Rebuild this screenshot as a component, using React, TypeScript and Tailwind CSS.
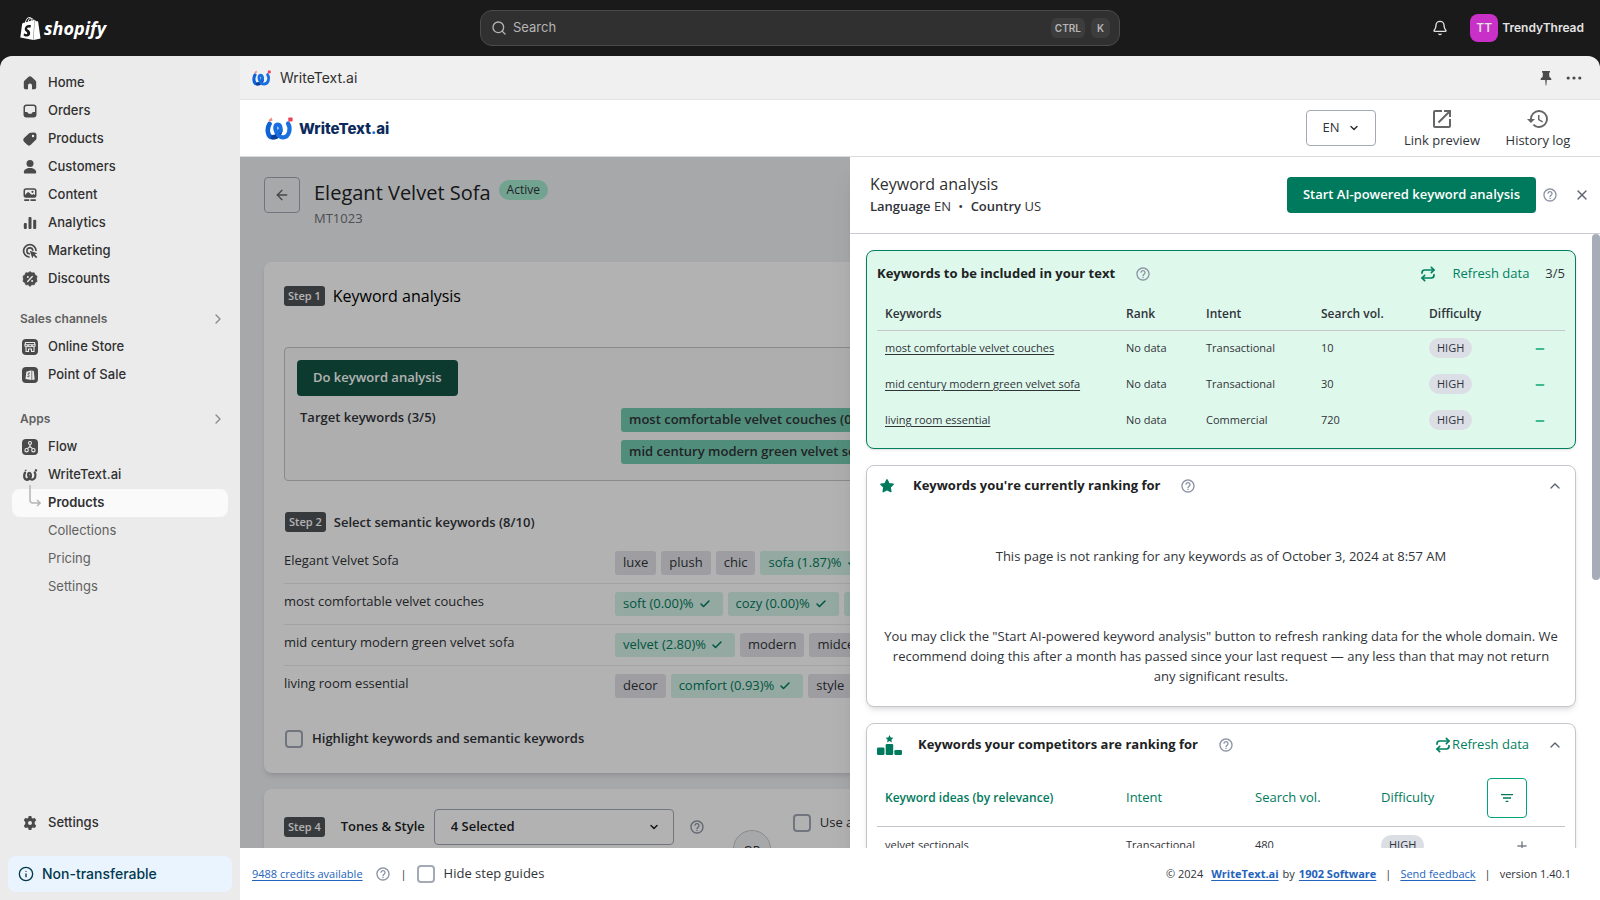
import React, { useState } from "react";
import { ArrowLeft, Bell, Check, ChevronDown, ChevronRight, ChevronUp, Info, Minus, Plus, Repeat, Search, X } from "lucide-react";
import { MdFilterList, MdHelpOutline, MdHistory, MdOpenInNew } from "react-icons/md";
import { SiShopify } from "react-icons/si";

const icons: { [key: string]: React.ReactNode } = {
  home: <path d="M8 1.2c.5 0 1 .2 1.4.6l4 3.8c.5.5.8 1.1.8 1.8v5c0 1-.8 1.8-1.800 1.800H10V10.500a2 2 0 0 0-4 0v3.700H3.600c-1 0-1.800-.8-1.800-1.800v-5c0-.7.3-1.300.8-1.800l4-3.800c.4-.4.9-.6 1.400-.6z" />,
  orders: (
    <path
      fillRule="evenodd"
      d="M4.500 1.500h7A3 3 0 0 1 14.500 4.500v7a3 3 0 0 1-3 3h-7a3 3 0 0 1-3-3v-7a3 3 0 0 1 3-3zm0 1.500A1.500 1.500 0 0 0 3 4.500V9h1.800c.4 0 .7.200.9.500l.5.8c.2.400.5.500.9.500h1.800c.4 0 .7-.1.900-.5l.5-.8c.2-.3.500-.5.900-.5H13V4.500A1.500 1.500 0 0 0 11.500 3z"
    />
  ),
  products: (
    <path
      fillRule="evenodd"
      d="M8.600 1.700 12 1.500A2.500 2.500 0 0 1 14.500 4v3.300c0 .5-.2 1-.6 1.400l-4.800 4.900a3 3 0 0 1-4.200 0L2.300 11a3 3 0 0 1 0-4.200l4.900-4.500c.4-.4.9-.6 1.400-.6zM11 6.200a1.200 1.200 0 1 0 0-2.400 1.200 1.200 0 0 0 0 2.400z"
    />
  ),
  customers: (
    <>
      <circle cx="8" cy="4.500" r="3.500" />
      <path d="M1.800 13.500c0-3 2.700-4.500 6.200-4.500s6.200 1.500 6.200 4.500c0 .6-.4 1-1 1H2.800c-.6 0-1-.4-1-1z" />
    </>
  ),
  content: (
    <>
      <path
        fillRule="evenodd"
        d="M4 1.200h8A2.500 2.500 0 0 1 14.500 3.700v4.600A2.500 2.500 0 0 1 12 10.800H4A2.500 2.500 0 0 1 1.500 8.300V3.700A2.500 2.500 0 0 1 4 1.200zM3 8l2.400-2.400c.5-.5 1.200-.5 1.700 0l1.700 1.700c.6.500 1.300.5 1.900.1l.7-.4L13 8V3.700a1 1 0 0 0-1-1H4a1 1 0 0 0-1 1z"
      />
      <circle cx="10.500" cy="4.800" r="1.100" />
      <path d="M2.200 12.300h5v1.600h-5zM8.500 12.300h5.300v1.600H8.500z" />
    </>
  ),
  analytics: (
    <>
      <rect x="1.800" y="8" width="3" height="6" rx="1" />
      <rect x="6.500" y="2" width="3" height="12" rx="1" />
      <rect x="11.200" y="4.800" width="3" height="9.200" rx="1" />
    </>
  ),
  marketing: (
    <>
      <path d="M14 7.500A6.200 6.200 0 1 0 7 14" fill="none" stroke="currentColor" strokeWidth="1.700" strokeLinecap="round" />
      <path d="M10.800 7.200A3 3 0 1 0 7.300 10.800" fill="none" stroke="currentColor" strokeWidth="1.600" strokeLinecap="round" />
      <path d="M7.800 7.800l7.500 2.500-2.500 1.300 2.500 2.500-1.200 1.200-2.500-2.500-1.300 2.500z" />
    </>
  ),
  discounts: (
    <>
      <path d="M8 .6l1.900 1.400 2.300-.2.800 2.200 2 1.200L14.500 8l.5 2.400-2 1.200-.8 2.200-2.300-.2L8 15.400l-1.900-1.800-2.300.2L3 11.600l-2-1.200L1.500 8 1 5.200 3 4l.8-2.200 2.300.2z" strokeLinejoin="round" stroke="currentColor" strokeWidth=".8" />
      <path d="M10.300 5.600 5.700 10.400" stroke="#ebebeb" strokeWidth="1.400" strokeLinecap="round" />
      <circle cx="5.900" cy="6" r="1" fill="#ebebeb" />
      <circle cx="10.100" cy="10" r="1" fill="#ebebeb" />
    </>
  ),
  store: (
    <>
      <rect width="16" height="16" rx="4" />
      <path d="M3.500 3.500h9l.7 2.800c0 1-.7 1.500-1.500 1.500S10.300 7.200 10 6.500C9.700 7.300 9 7.800 8 7.800S6.300 7.300 6 6.500c-.3.700-1 1.300-1.800 1.300S2.800 7.200 2.800 6.300zM4 8v4.500h2.500V10h3v2.500H12V8M3 5.800h10" fill="none" stroke="#ebebeb" strokeWidth="1.100" />
    </>
  ),
  pos: (
    <>
      <rect width="16" height="16" rx="4" />
      <path d="M4.300 4.800 9.500 3.300v9.700l-6-1zM10.200 3.500l1.600.8.900 8.100-2.500.6z" fill="#ebebeb" />
      <path d="M8 6.300c-1.200-.6-2.200 0-2.100.8.100.9 1.500.9 1.400 1.900-.1.900-1.200 1-1.900.4" fill="none" stroke="#4a4a4a" strokeWidth="1" />
    </>
  ),
  flow: (
    <>
      <rect width="16" height="16" rx="4" />
      <g fill="none" stroke="#ebebeb" strokeWidth="1.100">
        <circle cx="8" cy="4" r="1.500" />
        <circle cx="4.600" cy="11.200" r="1.700" />
        <circle cx="11.400" cy="11.200" r="1.700" />
        <path d="M8 5.500v2L5.500 9.700M8 7.500l2.500 2.200" />
      </g>
    </>
  ),
  settings: (
    <path
      fillRule="evenodd"
      d="M6.700 1h2.600l.5 2 1 .6 2-.6 1.400 2.300L12.700 7v2l1.500 1.700-1.400 2.300-2-.6-1 .6-.5 2H6.700l-.5-2-1-.6-2 .6-1.400-2.300L3.300 9V7L1.800 5.300 3.200 3l2 .6 1-.6zM8 10a2 2 0 1 0 0-4 2 2 0 0 0 0 4z"
    />
  ),
};

const Icon = ({ name }: { name: string }) => (
  <svg viewBox="0 0 16 16" fill="currentColor" className="size-4 shrink-0" aria-hidden="true">
    {icons[name]}
  </svg>
);

const WriteTextMark = ({ className, mono = false }: { className: string; mono?: boolean }) => (
  <svg viewBox="0 0 28 23" className={className} fill="none" strokeLinecap="round" aria-hidden="true">
    <path d="M4.500 7C1.800 11 2 20.300 7.800 20.300c3.500 0 6.200-2.800 7.300-6.300" stroke={mono ? "#4a4a4a" : "#0f62d6"} strokeWidth="4.600" />
    <path d="M8 20.300c3.500 0 6-2.500 7.200-6" stroke={mono ? "#4a4a4a" : "#0a3f94"} strokeWidth="4.600" />
    <path d="M15.300 14c1-3.500-.3-6.500-2.600-6.500-2.200 0-2.900 2.500-2.100 5.500 1 4 4 7.600 7.800 7.300C24.500 20 26 11 23 6.500" stroke={mono ? "#4a4a4a" : "#1a6fe0"} strokeWidth="4.200" />
    <path d="M3.500 3.200 6.500.6l1.200 2.800-3.200 1z" fill={mono ? "#4a4a4a" : "#f58a7a"} />
    <rect x="23.300" y=".4" width="4.300" height="4.200" rx=".8" fill={mono ? "#4a4a4a" : "#ee4056"} />
  </svg>
);

const mainLinks = [
  { icon: "home", label: "Home" },
  { icon: "orders", label: "Orders" },
  { icon: "products", label: "Products" },
  { icon: "customers", label: "Customers" },
  { icon: "content", label: "Content" },
  { icon: "analytics", label: "Analytics" },
  { icon: "marketing", label: "Marketing" },
  { icon: "discounts", label: "Discounts" },
];

const NavLink = ({ icon, label }: { icon: string; label: string }) => (
  <a href="#" className="flex h-7 items-center pl-[22px]">
    <span className="flex w-[26px]">
      <Icon name={icon} />
    </span>
    <span className="font-medium text-[#303030]">{label}</span>
  </a>
);

const NavHeading = ({ label }: { label: string }) => (
  <button className="mt-3 flex h-7 w-full items-center justify-between pr-[14px] pl-5 text-xs font-semibold text-[#616161]">
    {label}
    <ChevronRight className="size-4 text-[#8a8a8a]" />
  </button>
);

const Sidebar = () => (
  <nav className="flex w-60 shrink-0 flex-col bg-[#ebebeb] pt-[13px] pb-2 font-['Inter',sans-serif] text-[13px] text-[#4a4a4a]">
    {mainLinks.map((link) => (
      <NavLink key={link.label} {...link} />
    ))}
    <NavHeading label="Sales channels" />
    <NavLink icon="store" label="Online Store" />
    <NavLink icon="pos" label="Point of Sale" />
    <div className="h-1" />
    <NavHeading label="Apps" />
    <NavLink icon="flow" label="Flow" />
    <a href="#" className="flex h-7 items-center pl-[22px]">
      <span className="w-[26px]">
        <WriteTextMark className="h-3 w-4" mono />
      </span>
      <span className="font-medium text-[#303030]">WriteText.ai</span>
    </a>
    <a href="#" className="relative mx-3 flex h-7 items-center rounded-lg bg-[#fafafa] pl-9 font-semibold text-[#303030]">
      <svg viewBox="0 0 14 22" fill="none" stroke="#b5b5b5" strokeWidth="1.500" className="absolute -top-1 left-4 h-[22px] w-[14px]">
        <path d="M2 0v15a3 3 0 0 0 3 3h7M9 15l3.200 3L9 21" />
      </svg>
      Products
    </a>
    {["Collections", "Pricing", "Settings"].map((label) => (
      <a key={label} href="#" className="flex h-7 items-center pl-12 text-[#616161]">
        {label}
      </a>
    ))}
    <div className="mt-auto mb-[19px]">
      <NavLink icon="settings" label="Settings" />
    </div>
    <button className="mx-2 flex h-9 items-center gap-2 rounded-lg bg-[#eaf4ff] pl-[10px] text-sm font-medium text-[#00394d]">
      <Info className="size-4" />
      Non-transferable
    </button>
  </nav>
);

const TopBar = () => (
  <header className="grid h-14 shrink-0 grid-cols-[1fr_640px_1fr] items-center bg-[#1a1a1a] font-['Inter',sans-serif]">
    <a href="#" className="flex items-center gap-[2px] pl-[19px] text-white">
      <SiShopify className="size-[23px]" />
      <span className="font-['Open_Sans',sans-serif] text-lg leading-6 font-bold italic">shopify</span>
    </a>
    <label className="flex h-9 items-center gap-[6px] rounded-xl border border-[#4a4a4a] bg-[#303030] pr-[9px] pl-[10px] text-[#b5b5b5]">
      <Search className="size-4" />
      <input type="text" placeholder="Search" aria-label="Search" className="min-w-0 flex-1 bg-transparent text-[13px] outline-none placeholder:text-[#b5b5b5]" />
      <kbd className="rounded-md bg-[#3d3d3d] px-1 font-['Inter',sans-serif] text-[10px] leading-5 font-semibold">CTRL</kbd>
      <kbd className="rounded-md bg-[#3d3d3d] px-[6px] font-['Inter',sans-serif] text-[10px] leading-5 font-semibold">K</kbd>
    </label>
    <div className="flex items-center justify-end pr-4 text-[#e3e3e3]">
      <button aria-label="Notifications" className="mr-[22px]">
        <Bell className="size-4" />
      </button>
      <button className="flex items-center gap-1 text-xs font-semibold">
        <span className="flex size-7 items-center justify-center rounded-lg bg-[#c830c8]">TT</span>
        TrendyThread
      </button>
    </div>
  </header>
);

const AppHeader = () => (
  <>
    <div className="flex h-11 shrink-0 items-center border-b border-[#e3e3e3] bg-[#f0f0f0] pr-[18px] pl-3 font-['Inter',sans-serif] text-sm text-[#303030]">
      <WriteTextMark className="mr-[9px] h-4 w-[19px]" />
      WriteText.ai
      <button aria-label="Pin app" className="mr-[14px] ml-auto">
        <svg viewBox="0 0 12 16" fill="#4a4a4a" className="h-4 w-3">
          <path d="M2.500 1h7c.4 0 .6.300.6.600 0 .9-.8 1.200-1 2l.3 3.400c1.300.7 2 1.700 2 3.100H6.800L6.300 15.500h-.6L5.200 10.100H.6C.6 8.700 1.300 7.700 2.600 7l.3-3.400c-.2-.8-1-1.100-1-2 0-.3.2-.6.600-.6z" />
        </svg>
      </button>
      <button aria-label="More actions">
        <svg viewBox="0 0 16 16" fill="#4a4a4a" className="size-4">
          <circle cx="2.200" cy="8" r="1.600" />
          <circle cx="8" cy="8" r="1.600" />
          <circle cx="13.800" cy="8" r="1.600" />
        </svg>
      </button>
    </div>
    <div className="flex h-[57px] shrink-0 items-center border-b border-[#d9dbde] bg-white pr-[28px] pl-[25px]">
      <a href="#" className="flex items-center gap-[6px] font-['Inter',sans-serif] text-[15px] font-extrabold text-[#0b2a5b]">
        <WriteTextMark className="h-[23px] w-7" />
        <span className="pt-[3px]">
          WriteText<span className="text-[#1a6fe0]">.</span>ai
        </span>
      </a>
      <button className="mr-7 ml-auto flex h-9 w-[70px] items-center justify-center gap-2 rounded border border-[#a3a9b5]">
        EN
        <ChevronDown className="size-3 stroke-[3]" />
      </button>
      <button className="mr-6 flex w-[76px] flex-col items-center leading-[18px] whitespace-nowrap">
        <MdOpenInNew className="size-6 text-[#666]" />
        Link preview
      </button>
      <button className="flex w-[68px] flex-col items-center leading-[18px] whitespace-nowrap">
        <MdHistory className="size-6 text-[#666]" />
        History log
      </button>
    </div>
  </>
);

const Step = ({ n }: { n: number }) => (
  <span className="rounded-[3px] bg-[#505357] px-1 text-[11px] leading-5 font-semibold text-white">Step {n}</span>
);

const CheckField = ({ label, className = "" }: { label: string; className?: string }) => {
  const [checked, setChecked] = useState(false);
  return (
    <label className={`flex items-center gap-[9px] whitespace-nowrap ${className}`}>
      <input
        type="checkbox"
        checked={checked}
        onChange={() => setChecked(!checked)}
        className="size-[18px] appearance-none rounded border-2 border-[#a3a9b5] checked:bg-[#008060]"
      />
      {label}
    </label>
  );
};

const Help = ({ className = "" }: { className?: string }) => (
  <button aria-label="Help" className={`text-[#8c93a3] ${className}`}>
    <MdHelpOutline className="size-4" />
  </button>
);

const semanticRows = [
  { label: "Elegant Velvet Sofa", chips: ["luxe", "plush", "chic", "sofa (1.87)%"] },
  { label: "most comfortable velvet couches", chips: ["soft (0.00)%", "cozy (0.00)%", "lounge (0.00)%"] },
  { label: "mid century modern green velvet sofa", chips: ["velvet (2.80)%", "modern", "midcentury"] },
  { label: "living room essential", chips: ["decor", "comfort (0.93)%", "style"] },
];

const Chip = ({ text }: { text: string }) => {
  const selected = text.includes("%");
  return (
    <button className={`flex h-6 items-center gap-[5px] rounded-[3px] px-2 whitespace-nowrap ${selected ? "bg-[#d5f2e8] pr-3 text-[#007a5c]" : "bg-[#e2e3e8]"}`}>
      {text}
      {selected && <Check className="size-3 stroke-[3]" />}
    </button>
  );
};

const ProductEditor = () => (
  <main className="h-full overflow-hidden bg-[#f0f1f4] px-6 pt-5">
    <div className="flex items-start">
      <button aria-label="Back" className="flex size-9 items-center justify-center rounded border border-[#a3a9b5] text-[#666]">
        <ArrowLeft className="size-4" />
      </button>
      <div className="ml-[14px]">
        <div className="flex items-start gap-2">
          <h1 className="pt-1 text-xl leading-6 font-medium text-[#202223]">Elegant Velvet Sofa</h1>
          <span className="mt-[3px] rounded-full bg-[#a4e8ce] px-2 text-xs leading-5">Active</span>
        </div>
        <p className="leading-[26px] text-[#6d7175]">MT1023</p>
      </div>
    </div>

    <section className="mt-[31px] h-[511px] rounded-lg bg-white px-5 pt-6 shadow-md">
      <div className="flex items-center gap-2">
        <Step n={1} />
        <h2 className="text-base leading-5 text-black">Keyword analysis</h2>
      </div>
      <div className="mt-[41px] h-[134px] rounded border border-[#c3c7cc] bg-[#f9f9f9] px-3 pt-3">
        <button className="h-9 rounded bg-[#145443] px-4 font-semibold text-white">Do keyword analysis</button>
        <div className="mt-3 flex font-semibold">
          <p className="w-[324px] shrink-0 pl-[3px] leading-[18px]">Target keywords (3/5)</p>
          <div className="flex flex-col items-start gap-2">
            <button className="h-6 rounded-[3px] bg-[#74cbb0] px-2 whitespace-nowrap">most comfortable velvet couches (0.00)%</button>
            <button className="h-6 rounded-[3px] bg-[#74cbb0] px-2 whitespace-nowrap">mid century modern green velvet sofa (0.00)%</button>
          </div>
        </div>
      </div>
      <div className="mt-[31px] flex items-center gap-2 pl-px">
        <Step n={2} />
        <h3 className="leading-5 font-semibold">Select semantic keywords (8/10)</h3>
      </div>
      <div className="mt-[11px] divide-y divide-[#e8eaed]">
        {semanticRows.map(({ label, chips }) => (
          <div key={label} className="flex h-[41px] pt-2">
            <p className="w-[331px] shrink-0">{label}</p>
            <div className="flex gap-[5px]">
              {chips.map((chip) => (
                <Chip key={chip} text={chip} />
              ))}
            </div>
          </div>
        ))}
      </div>
      <CheckField label="Highlight keywords and semantic keywords" className="mt-[22px] pl-px font-semibold" />
    </section>

    <section className="mt-4 flex h-60 items-start rounded-lg bg-white px-5 pt-5 shadow-md">
      <div className="flex h-9 items-center text-[#202223]">
        <Step n={4} />
        <label htmlFor="tones" className="ml-4 w-[93px] shrink-0 font-semibold whitespace-nowrap">
          Tones &amp; Style
        </label>
        <div className="grid w-60 items-center">
          <select id="tones" className="col-start-1 row-start-1 h-9 w-full appearance-none rounded border border-[#a3a9b5] px-4 font-semibold">
            <option>4 Selected</option>
          </select>
          <ChevronDown className="pointer-events-none col-start-1 row-start-1 mr-[14px] size-3 justify-self-end stroke-[3]" />
        </div>
        <Help className="ml-[15px]" />
      </div>
      <div className="mt-[21px] ml-7 flex size-[38px] shrink-0 items-center justify-center rounded-full border border-[#c3c7cc] bg-[#f0f1f4] pt-1 text-xs">OR</div>
      <CheckField label="Use a style reference" className="mt-1 ml-[22px]" />
    </section>
  </main>
);

const Difficulty = ({ level }: { level: string }) => (
  <span className="inline-block rounded-full bg-[#dcdee6] px-2 leading-5">{level}</span>
);

const keywords = [
  { keyword: "most comfortable velvet couches", intent: "Transactional", volume: 10 },
  { keyword: "mid century modern green velvet sofa", intent: "Transactional", volume: 30 },
  { keyword: "living room essential", intent: "Commercial", volume: 720 },
];

const IncludedKeywords = () => (
  <section className="h-[199px] rounded-lg border border-[#008060] bg-[#dff8ec] px-[10px] pt-[13px] shadow">
    <div className="flex h-5 items-center">
      <h3 className="font-bold text-[#202223]">Keywords to be included in your text</h3>
      <Help className="ml-5 flex" />
      <button className="ml-auto flex items-center gap-4 text-[#008060]">
        <Repeat className="size-4 stroke-[2.5]" />
        Refresh data
      </button>
      <span className="ml-4">3/5</span>
    </div>
    <table className="mt-[14px] w-full table-fixed text-left text-[11px]">
      <colgroup>
        <col className="w-[241px]" />
        <col className="w-20" />
        <col className="w-[115px]" />
        <col className="w-[108px]" />
        <col />
        <col className="w-[74px]" />
      </colgroup>
      <thead>
        <tr className="h-8 border-b border-[#c3c7cc] text-xs">
          {["Keywords", "Rank", "Intent", "Search vol.", "Difficulty", ""].map((head) => (
            <th key={head} className="px-2 font-semibold">
              {head}
            </th>
          ))}
        </tr>
      </thead>
      <tbody>
        {keywords.map(({ keyword, intent, volume }) => (
          <tr key={keyword} className="h-9">
            <td className="px-2 whitespace-nowrap">
              <a href="#" className="underline underline-offset-2">
                {keyword}
              </a>
            </td>
            <td className="px-2">No data</td>
            <td className="px-2">{intent}</td>
            <td className="px-2">{volume}</td>
            <td className="px-2">
              <Difficulty level="HIGH" />
            </td>
            <td className="pr-[19px] text-right">
              <button aria-label={`Remove ${keyword}`} className="align-middle text-[#40b890]">
                <Minus className="size-3 stroke-[4]" />
              </button>
            </td>
          </tr>
        ))}
      </tbody>
    </table>
  </section>
);

const RankingKeywords = () => (
  <section className="mt-4 h-[242px] rounded-lg border border-[#c3c7cc] bg-white px-[10px] pt-[10px] shadow-md">
    <div className="flex h-5 items-center">
      <svg viewBox="0 0 16 16" fill="#007a5c" stroke="#007a5c" strokeWidth="1.500" strokeLinejoin="round" className="mx-[2px] size-4">
        <path d="M8 1.800 9.900 5.700l4.200.6-3 3 .7 4.300L8 11.600l-3.800 2 .7-4.300-3-3 4.200-.6z" />
      </svg>
      <h3 className="ml-4 font-bold text-[#202223]">Keywords you're currently ranking for</h3>
      <Help className="ml-5 flex" />
      <button aria-label="Collapse" className="mr-[2px] ml-auto">
        <ChevronUp className="size-4 text-[#5c6370]" />
      </button>
    </div>
    <p className="mt-[50px] text-center leading-5">This page is not ranking for any keywords as of October 3, 2024 at 8:57 AM</p>
    <p className="mt-[60px] text-center leading-5 whitespace-nowrap">
      You may click the "Start AI-powered keyword analysis" button to refresh ranking data for the whole domain. We
      <br />
      recommend doing this after a month has passed since your last request — any less than that may not return
      <br />
      any significant results.
    </p>
  </section>
);

const CompetitorKeywords = () => (
  <section className="mt-4 rounded-lg border border-[#c3c7cc] bg-white px-[10px] pt-[9px] shadow-md">
    <div className="flex h-6 items-center">
      <svg viewBox="0 0 25 20" fill="#007a5c" className="h-5 w-[25px]">
        <path d="M12.500 0l1.200 2.400 2.700.4-2 1.900.5 2.700-2.400-1.300-2.400 1.300.5-2.700-2-1.900 2.700-.4z" />
        <rect x="0" y="12.500" width="7.500" height="7.500" rx="1.200" />
        <rect x="8.700" y="9" width="7.500" height="11" rx="1.200" />
        <rect x="17.400" y="15" width="7.600" height="5" rx="1.200" />
      </svg>
      <h3 className="ml-4 font-bold text-[#202223]">Keywords your competitors are ranking for</h3>
      <Help className="ml-5 flex" />
      <button className="ml-auto flex items-center gap-px text-[#008060]">
        <Repeat className="size-4 stroke-[2.5]" />
        Refresh data
      </button>
      <button aria-label="Collapse" className="mr-[2px] ml-[18px]">
        <ChevronUp className="size-4 text-[#5c6370]" />
      </button>
    </div>
    <table className="mt-[13px] w-full table-fixed text-left text-[11px]">
      <colgroup>
        <col className="w-[241px]" />
        <col className="w-[129px]" />
        <col className="w-[126px]" />
        <col />
        <col className="w-[90px]" />
      </colgroup>
      <thead>
        <tr className="h-14 border-b border-[#c3c7cc] text-[13px] text-[#007a5c]">
          <th className="px-2 text-xs font-semibold">Keyword ideas (by relevance)</th>
          <th className="px-2 font-normal">Intent</th>
          <th className="px-2 font-normal">Search vol.</th>
          <th className="px-2 font-normal">Difficulty</th>
          <th>
            <button aria-label="Filter" className="ml-3 flex size-10 items-center justify-center rounded border border-[#00a37a]">
              <MdFilterList className="size-4" />
            </button>
          </th>
        </tr>
      </thead>
      <tbody>
        <tr className="h-[38px]">
          <td className="px-2">velvet sectionals</td>
          <td className="px-2">Transactional</td>
          <td className="px-2">480</td>
          <td className="px-2">
            <Difficulty level="HIGH" />
          </td>
          <td className="pr-9 text-right">
            <button aria-label="Add velvet sectionals" className="align-middle text-[#7b818c]">
              <Plus className="size-[14px] stroke-[2.5]" />
            </button>
          </td>
        </tr>
      </tbody>
    </table>
  </section>
);

const KeywordDrawer = () => (
  <aside className="absolute inset-y-0 right-0 flex w-[750px] flex-col bg-white shadow-xl">
    <div className="flex h-[77px] shrink-0 items-center border-b border-[#c9ccd1] pr-[10px] pl-5">
      <div className="pt-px">
        <h2 className="text-base leading-[21px] text-[#303030]">Keyword analysis</h2>
        <p className="leading-[22px]">
          <span className="font-semibold">Language</span> EN <span className="mx-1">•</span> <span className="font-semibold">Country</span> US
        </p>
      </div>
      <button className="ml-auto h-9 rounded bg-[#007a5c] px-4 font-semibold text-white">Start AI-powered keyword analysis</button>
      <Help className="ml-[6px]" />
      <button aria-label="Close" className="ml-4">
        <X className="size-4 text-[#5c6370]" />
      </button>
    </div>
    <div className="flex min-h-0 flex-1">
      <div className="min-w-0 flex-1 overflow-hidden px-4 pt-4">
        <IncludedKeywords />
        <RankingKeywords />
        <CompetitorKeywords />
      </div>
      <div className="h-[346px] w-2 rounded-full bg-[#a6adb8]" />
    </div>
  </aside>
);

const Footer = () => (
  <footer className="flex h-[52px] shrink-0 items-center bg-white pr-[29px] pl-3 text-[11px]">
    <a href="#" className="text-[#2463bc] underline underline-offset-2">
      9488 credits available
    </a>
    <Help className="ml-3 flex" />
    <span className="mx-[10px]">|</span>
    <CheckField label="Hide step guides" className="text-[13px]" />
    <div className="ml-auto flex items-center">
      © 2024
      <a href="#" className="ml-2 font-bold text-[#2463bc] underline underline-offset-2">
        WriteText.ai
      </a>
      <span className="mx-1">by</span>
      <a href="#" className="font-bold text-[#2463bc] underline underline-offset-2">
        1902 Software
      </a>
      <span className="mx-[9px]">|</span>
      <a href="#" className="text-[#2463bc] underline underline-offset-2">
        Send feedback
      </a>
      <span className="mx-[9px]">|</span>
      version 1.40.1
    </div>
  </footer>
);

export default function App() {
  return (
    <div className="flex h-screen flex-col overflow-hidden bg-[#1a1a1a] font-['Open_Sans',sans-serif] text-[13px] text-[#303338]">
      <TopBar />
      <div className="flex min-h-0 flex-1 overflow-hidden rounded-t-xl">
        <Sidebar />
        <div className="flex min-w-0 flex-1 flex-col">
          <AppHeader />
          <div className="relative min-h-0 flex-1 overflow-hidden">
            <ProductEditor />
            <div className="absolute inset-0 bg-black/30" />
            <KeywordDrawer />
          </div>
          <Footer />
        </div>
      </div>
    </div>
  );
}
